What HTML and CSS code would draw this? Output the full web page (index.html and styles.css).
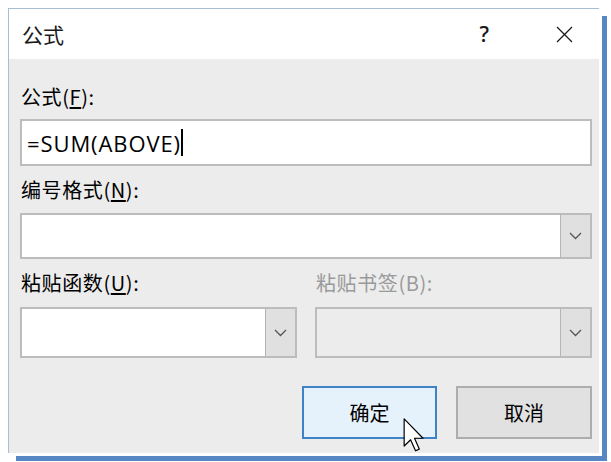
FILE: index.html
```html
<!DOCTYPE html>
<html lang="zh-CN">
<head>
<meta charset="utf-8">
<title>公式</title>
<link rel="stylesheet" href="styles.css">
</head>
<body>
<div class="frame">
  <div class="titlebar">
    <span class="title">公式</span>
    <span class="help">?</span>
    <span class="close"><svg width="17" height="17" viewBox="0 0 17 17"><path d="M1 1 L16 16 M16 1 L1 16" stroke="#1a1a1a" stroke-width="1.3" fill="none"/></svg></span>
  </div>
  <div class="body">
    <div class="label">公式(<u>F</u>):</div>
    <div class="input"><span class="value">=SUM(ABOVE)</span><span class="caret"></span></div>
    <div class="label gap2">编号格式(<u>N</u>):</div>
    <div class="combo">
      <div class="field"></div>
      <div class="drop"><svg width="13" height="8" viewBox="0 0 13 8"><polyline points="1,1 6.5,6.5 12,1" fill="none" stroke="#555" stroke-width="1.3"/></svg></div>
    </div>
    <div class="pair">
      <div class="col">
        <div class="label">粘贴函数(<u>U</u>):</div>
        <div class="combo tall">
          <div class="field"></div>
          <div class="drop"><svg width="13" height="8" viewBox="0 0 13 8"><polyline points="1,1 6.5,6.5 12,1" fill="none" stroke="#555" stroke-width="1.3"/></svg></div>
        </div>
      </div>
      <div class="col">
        <div class="label disabled">粘贴书签(B):</div>
        <div class="combo tall off">
          <div class="field"></div>
          <div class="drop"><svg width="13" height="8" viewBox="0 0 13 8"><polyline points="1,1 6.5,6.5 12,1" fill="none" stroke="#555" stroke-width="1.3"/></svg></div>
        </div>
      </div>
    </div>
    <div class="buttons">
      <div class="btn primary">确定<svg class="pointer" width="21" height="34" viewBox="0 0 12 20"><path d="M0.5 0.5 V16.5 L4.3 12.8 L7.2 19.3 L9.4 18.3 L6.6 11.9 H11.6 Z" fill="#fff" stroke="#000" stroke-width="0.7" stroke-linejoin="round"/></svg></div>
      <div class="btn">取消</div>
    </div>
  </div>
</div>
</body>
</html>
```

FILE: styles.css
```css
* { box-sizing: border-box; }
html, body { margin: 0; padding: 0; background: #fff; }
body {
  width: 611px;
  height: 462px;
  overflow: hidden;
  font-family: "Noto Sans CJK SC", "Noto Sans", sans-serif;
  color: #000;
}
.frame {
  margin: 8px 0 0 8px;
  width: 591px;
  height: 445px;
  border-top: 1px solid #a9bdd6;
  border-left: 1px solid #a9bdd6;
  display: flex;
  flex-direction: column;
  box-shadow: 3px 3px 0 0 #fff, 8px 8px 0 0 #5687c4;
}
.titlebar {
  height: 50px;
  background: #fff;
  display: flex;
  align-items: center;
  padding-left: 13px;
}
.title {
  font-size: 21px;
  line-height: 26px;
  color: #1a1a1a;
}
.help {
  margin-left: auto;
  font-family: "Open Sans", "Noto Sans", sans-serif;
  font-size: 21px;
  font-weight: 600;
  line-height: 26px;
  color: #1a1a1a;
  margin-right: 67px;
}
.close {
  display: flex;
  margin-right: 26px;
}
.body {
  flex: 1;
  background: #ececec;
  padding: 26px 7px 0 11px;
  display: flex;
  flex-direction: column;
}
.label {
  font-size: 20px;
  line-height: 24px;
  height: 24px;
  padding-left: 1px;
  letter-spacing: 0.6px;
  white-space: nowrap;
}
.label u { text-underline-offset: 2px; }
.label.disabled { color: #9a9a9a; }
.gap2 { margin-top: 12px; }
.input {
  margin-top: 10px;
  height: 47px;
  background: #fff;
  border: 2px solid #bcbcbc;
  display: flex;
  align-items: center;
  padding-left: 5px;
}
.value {
  font-family: "Open Sans", "Noto Sans", sans-serif;
  font-size: 22px;
  letter-spacing: 0.9px;
  color: #000;
}
.caret {
  width: 2px;
  height: 27px;
  background: #000;
  margin-left: 0;
}
.combo {
  margin-top: 11px;
  height: 46px;
  border: 2px solid #bcbcbc;
  display: flex;
  background: #fff;
}
.combo.tall { height: 51px; margin-top: 12px; }
.combo.off { background: #ececec; }
.field { flex: 1; }
.drop {
  width: 30px;
  background: #e0e0e0;
  border-left: 1px solid #b4b4b4;
  display: flex;
  align-items: center;
  justify-content: center;
}
.pair {
  margin-top: 12px;
  display: grid;
  grid-template-columns: 277px 277px;
  column-gap: 18px;
}
.col { display: flex; flex-direction: column; }
.buttons {
  margin-top: 28px;
  display: flex;
  justify-content: flex-end;
  gap: 19px;
}
.btn {
  position: relative;
  width: 136px;
  height: 53px;
  border: 2px solid #adadad;
  background: #e1e1e1;
  display: flex;
  align-items: center;
  justify-content: center;
  font-size: 20px;
}
.btn.primary {
  width: 135px;
  border-color: #3f82c6;
  background: #e5f1fb;
}
.pointer {
  position: absolute;
  left: 99px;
  top: 30px;
}
```
